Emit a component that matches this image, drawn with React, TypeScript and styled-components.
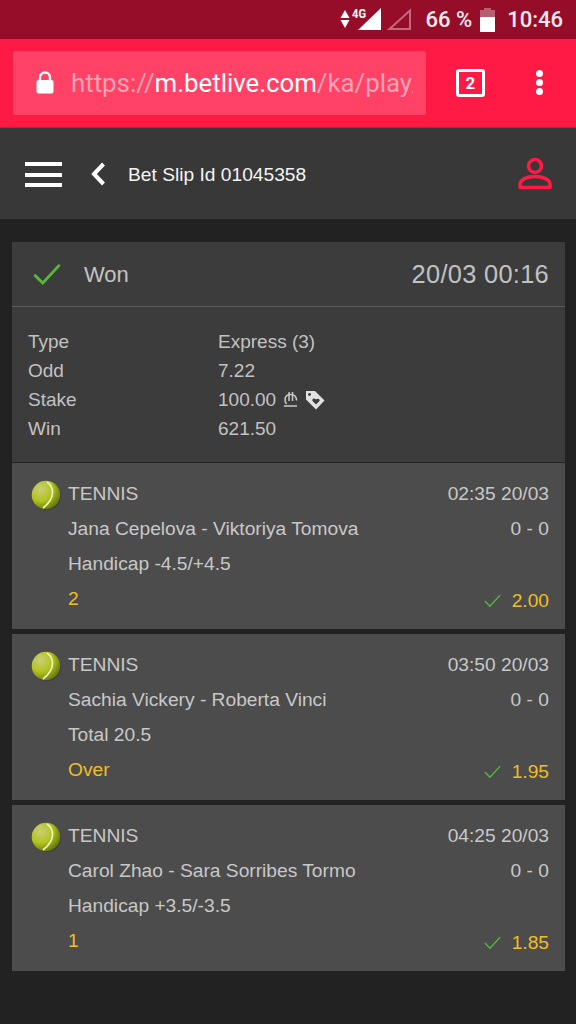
import styled, { createGlobalStyle } from "styled-components";

const GlobalStyle = createGlobalStyle`
  html, body {
    margin: 0;
    padding: 0;
    background: #222222;
  }
  body {
    font-family: "Liberation Sans", Arial, sans-serif;
  }
`;

const Page = styled.div`
  width: 576px;
  height: 1024px;
  overflow: hidden;
  display: flex;
  flex-direction: column;
  background: #222222;
`;

const StatusBar = styled.div`
  height: 39px;
  box-sizing: border-box;
  background: #960d29;
  display: flex;
  align-items: center;
  justify-content: flex-end;
  padding-right: 13px;
  color: #fbeaed;
  font-family: Roboto, sans-serif;
  font-weight: 500;
  font-size: 22px;
`;

const NetIcons = styled.svg`
  margin-right: 13px;
`;

const Percent = styled.span`
  margin-right: 8px;
`;

const BatteryIcon = styled.svg`
  margin-right: 12px;
`;

const BrowserBar = styled.div`
  height: 89px;
  box-sizing: border-box;
  background: #ff1a45;
  border-bottom: 1px solid #c8173a;
  display: flex;
  align-items: center;
  padding: 0 0 1px 13px;
`;

const UrlBox = styled.div`
  width: 413px;
  height: 64px;
  box-sizing: border-box;
  background: #ff4265;
  border-radius: 3px;
  display: flex;
  align-items: center;
  padding-left: 23px;
  overflow: hidden;
`;

const Url = styled.div`
  margin-left: 17px;
  width: 342px;
  overflow: hidden;
  white-space: nowrap;
  font-family: Roboto, sans-serif;
  font-size: 25.8px;
  color: #fff;
`;

const UrlDim = styled.span`
  color: #ffa3b5;
`;

const TabCount = styled.div`
  margin-left: 30px;
  width: 29px;
  height: 28px;
  box-sizing: border-box;
  border: 3px solid #fff;
  border-radius: 3px;
  display: flex;
  align-items: center;
  justify-content: center;
  font-family: Roboto, sans-serif;
  font-weight: 700;
  font-size: 17px;
  color: #fff;
`;

const KebabMenu = styled.div`
  margin-left: 51px;
  display: flex;
  flex-direction: column;
  gap: 2px;
`;

const Dot = styled.span`
  width: 7px;
  height: 7px;
  border-radius: 50%;
  background: #fff;
`;

const NavBar = styled.div`
  height: 91px;
  box-sizing: border-box;
  background: #383838;
  display: flex;
  align-items: center;
  padding: 0 24px 0 25px;
  color: #f4f4f4;
  font-size: 19.2px;
`;

const Burger = styled.div`
  width: 37px;
  display: flex;
  flex-direction: column;
  gap: 6.5px;
  margin-top: 2px;
`;

const BurgerLine = styled.span`
  height: 4px;
  background: #fff;
`;

const BackIcon = styled.svg`
  margin-left: 28px;
`;

const NavTitle = styled.div`
  margin-left: 22px;
  flex: 1;
  padding-top: 2px;
`;

const Content = styled.div`
  padding: 23px 11px 0 12px;
  display: flex;
  flex-direction: column;
  gap: 5px;
`;

const Summary = styled.div`
  background: #3c3c3c;
  color: #c2c2c2;
  margin-bottom: -4px;
`;

const SummaryHeader = styled.div`
  height: 65px;
  box-sizing: border-box;
  border-bottom: 1px solid #5a5a5a;
  display: flex;
  align-items: center;
  padding: 0 16px 0 21px;
`;

const Status = styled.div`
  margin-left: 23px;
  flex: 1;
  font-size: 22px;
  padding-top: 2px;
`;

const WhenText = styled.div`
  font-size: 25.4px;
  letter-spacing: 0.3px;
`;

const Details = styled.div`
  padding: 20px 16px 0;
  display: grid;
  grid-template-columns: 190px 1fr;
  grid-auto-rows: 29px;
  align-items: center;
  font-size: 19px;
  height: 155px;
  box-sizing: border-box;
  align-content: start;
`;

const StakeValue = styled.div`
  display: flex;
  align-items: center;
  gap: 7px;
`;

const Match = styled.div`
  height: 166px;
  box-sizing: border-box;
  background: #4c4c4c;
  padding: 13px 16px 0 19px;
  color: #c8c8c8;
  font-size: 19.2px;
  display: grid;
  grid-template-columns: 37px 1fr auto;
  grid-auto-rows: 35px;
  align-items: center;
`;

const BallCell = styled.div`
  display: flex;
  align-items: center;
  margin-top: 2px;
`;

const Wide = styled.div`
  grid-column: 2 / 4;
`;

const RightText = styled.div`
  text-align: right;
`;

const Pick = styled.div`
  color: #f0bd27;
`;

const PriceCell = styled.div`
  display: flex;
  align-items: center;
  justify-content: flex-end;
  gap: 11px;
  color: #f0bd27;
  padding-top: 5px;
`;

const Check = ({ size, width }: { size: number; width: number }) => (
  <svg width={size} height={size * 0.8} viewBox="0 0 30 24" fill="none">
    <path d="M1.5 12.5 L10.5 21.5 L28.5 2" stroke="#57b93a" strokeWidth={width} />
  </svg>
);

const TennisBall = ({ id }: { id: string }) => (
  <svg width="30" height="30" viewBox="0 0 30 30">
    <defs>
      <radialGradient id={id} cx="32%" cy="30%" r="75%">
        <stop offset="0%" stopColor="#c9cf78" />
        <stop offset="55%" stopColor="#b0c41c" />
        <stop offset="100%" stopColor="#67750f" />
      </radialGradient>
    </defs>
    <circle cx="15.8" cy="16" r="14" fill="#2a2a2a" opacity="0.55" />
    <circle cx="15" cy="15" r="14.3" fill={`url(#${id})`} />
    <path d="M16 2 C23 7 25 18 12 28" fill="none" stroke="#eef3c0" strokeWidth="1.6" />
  </svg>
);

const matches = [
  { time: "02:35 20/03", teams: "Jana Cepelova - Viktoriya Tomova", market: "Handicap -4.5/+4.5", pick: "2", odd: "2.00" },
  { time: "03:50 20/03", teams: "Sachia Vickery - Roberta Vinci", market: "Total 20.5", pick: "Over", odd: "1.95" },
  { time: "04:25 20/03", teams: "Carol Zhao - Sara Sorribes Tormo", market: "Handicap +3.5/-3.5", pick: "1", odd: "1.85" },
];

export default function App() {
  return (
    <Page>
      <GlobalStyle />
      <StatusBar>
        <NetIcons width="72" height="36" viewBox="0 -6 72 36">
          <path d="M0.5 10 L5 2 L9.5 10Z M0.5 12 L9.5 12 L5 20Z" fill="#fff" />
          <path d="M18 22 L41 0 V22Z" fill="#fff" />
          <text x="12" y="10" fontFamily="Roboto, sans-serif" fontWeight="700" fontSize="12.5" textLength="14" lengthAdjust="spacingAndGlyphs" fill="#fff" stroke="#960d29" strokeWidth="0.4" paintOrder="stroke">4G</text>
          <path d="M49.5 21 L70 2.5 V21Z" fill="none" stroke="#c4687b" strokeWidth="2" />
        </NetIcons>
        <Percent>66 %</Percent>
        <BatteryIcon width="15" height="24" viewBox="0 0 15 24">
          <path d="M4 0 H11 V2 H15 V24 H0 V2 H4Z" fill="#b85f72" />
          <rect x="0" y="9" width="15" height="15" fill="#fff" />
        </BatteryIcon>
        <span>10:46</span>
      </StatusBar>
      <BrowserBar>
        <UrlBox>
          <svg width="18" height="23" viewBox="0 0 18 23">
            <path d="M4 10 V6.5 a5 5 0 0 1 10 0 V10" fill="none" stroke="#fff" strokeWidth="2.4" />
            <rect x="0.5" y="9" width="17" height="13.5" rx="2" fill="#fff" />
          </svg>
          <Url>
            <UrlDim>https://</UrlDim>m.betlive.com<UrlDim>/ka/play/</UrlDim>
          </Url>
        </UrlBox>
        <TabCount>2</TabCount>
        <KebabMenu>
          <Dot />
          <Dot />
          <Dot />
        </KebabMenu>
      </BrowserBar>
      <NavBar>
        <Burger>
          <BurgerLine />
          <BurgerLine />
          <BurgerLine />
        </Burger>
        <BackIcon width="16" height="24" viewBox="0 0 16 24">
          <path d="M13.5 2 L4 12 L13.5 22" fill="none" stroke="#fff" strokeWidth="4" />
        </BackIcon>
        <NavTitle>Bet Slip Id 01045358</NavTitle>
        <svg width="34" height="34" viewBox="0 0 34 34" fill="none" stroke="#ff1a45" strokeWidth="3.5" strokeLinejoin="round">
          <circle cx="17" cy="9" r="6.5" />
          <path d="M2 30.5 V27.5 C2 22.5 9 19.5 17 19.5 C25 19.5 32 22.5 32 27.5 V30.5Z" />
        </svg>
      </NavBar>
      <Content>
        <Summary>
          <SummaryHeader>
            <Check size={28} width={3} />
            <Status>Won</Status>
            <WhenText>20/03 00:16</WhenText>
          </SummaryHeader>
          <Details>
            <div>Type</div>
            <div>Express (3)</div>
            <div>Odd</div>
            <div>7.22</div>
            <div>Stake</div>
            <StakeValue>
              100.00
              <svg width="15" height="17" viewBox="0 0 15 17" fill="none" stroke="#c8c8c8" strokeWidth="1.5">
                <path d="M3.5 13 C0.5 9 2 3.5 7.5 3.5 C11.5 3.5 13.5 6 13.5 9.5 M6 1 V10 M9.5 1 V10 M1 15 H14" />
              </svg>
              <svg width="20" height="20" viewBox="0 0 20 20">
                <path d="M1 1 H10 L19.5 10.5 L11 19.5 L1 9.5Z" fill="#e2e2e2" />
                <circle cx="4.5" cy="4.5" r="1.4" fill="#3c3c3c" />
                <path d="M11 14.5 L7.5 11 C6.5 9 9 7.5 11 9.5 C13 7.5 15.5 9.5 14.5 11Z" fill="#3c3c3c" />
              </svg>
            </StakeValue>
            <div>Win</div>
            <div>621.50</div>
          </Details>
        </Summary>
        {matches.map((m, i) => (
          <Match key={m.time}>
            <BallCell>
              <TennisBall id={`ball-${i}`} />
            </BallCell>
            <div>TENNIS</div>
            <RightText>{m.time}</RightText>
            <div />
            <div>{m.teams}</div>
            <RightText>0 - 0</RightText>
            <div />
            <Wide>{m.market}</Wide>
            <div />
            <Pick>{m.pick}</Pick>
            <PriceCell>
              <Check size={17} width={2.4} />
              {m.odd}
            </PriceCell>
          </Match>
        ))}
      </Content>
    </Page>
  );
}
